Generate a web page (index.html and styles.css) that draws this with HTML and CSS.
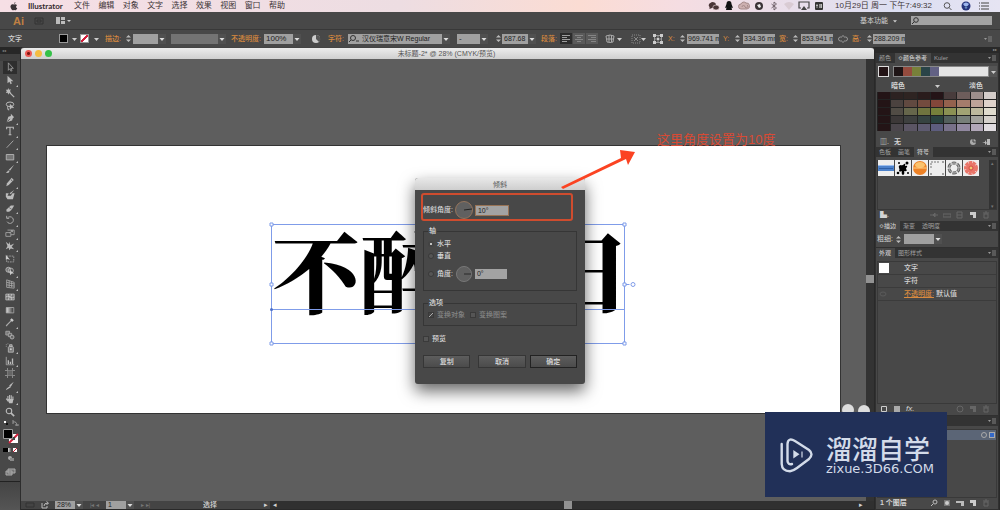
FILE: index.html
```
<!DOCTYPE html>
<html lang="zh-CN">
<head>
<meta charset="utf-8">
<title>Illustrator</title>
<link rel="stylesheet" href="styles.css">
</head>
<body>
<svg class="defs" aria-hidden="true">
  <symbol id="select" viewBox="0 0 12 12"><path d="M4 1v9l2-2 1 3 1.500-.6L7.300 7.600H10z" fill="#333" stroke="#aaa" stroke-width=".9"/></symbol>
  <symbol id="direct" viewBox="0 0 12 12"><path d="M3 1v9l2.300-2 1.400 3 1.500-.7L7 7.400h3z" fill="#bbb"/></symbol>
  <symbol id="wand" viewBox="0 0 12 12"><path d="M5 5l6 6" stroke="#bbb" stroke-width="1.500"/><path d="M4 0l.8 2.200L7 1.500 6 4l1.500 1.500-2.400.3L4 8l-.8-2.300L1 6l1.200-2L1 2l2.200.2z" fill="#bbb"/></symbol>
  <symbol id="lasso" viewBox="0 0 12 12"><ellipse cx="6" cy="4" rx="4.500" ry="2.800" fill="none" stroke="#bbb" stroke-width="1.200"/><path d="M3 6v3q0 2 2 2M6 4v6l2-2h2.500z" fill="#bbb" stroke="#bbb" stroke-width=".6"/></symbol>
  <symbol id="pen" viewBox="0 0 12 12"><path d="M7 1l4 4-1.500 1-1 3L2 11l2-6.500 3-1z" fill="#bbb"/><path d="M2.500 10.500L6 7" stroke="#444"/></symbol>
  <symbol id="type" viewBox="0 0 12 12"><path d="M2 4V1.500h8V4M6 1.500v9M4.300 10.500h3.400" fill="none" stroke="#bbb" stroke-width="1.300"/></symbol>
  <symbol id="line" viewBox="0 0 12 12"><path d="M2 10.500L10 2" stroke="#aaa" stroke-width="1.100"/></symbol>
  <symbol id="rect" viewBox="0 0 12 12"><path d="M1.500 3h9v6.500h-9z" fill="#777" stroke="#bbb"/></symbol>
  <symbol id="brush" viewBox="0 0 12 12"><path d="M11 1L6 8 4.500 6.800zM1 10q2 0 2.800-2.500L5.500 9q-2 3-4.500 1" fill="#bbb"/></symbol>
  <symbol id="pencil" viewBox="0 0 12 12"><path d="M8 1l2.500 2.500-6 6L1.500 11l1-3.500z" fill="#bbb"/><path d="M7 3l2 2" stroke="#444"/></symbol>
  <symbol id="blob" viewBox="0 0 12 12"><path d="M11 0L7 5 5.500 4zM1 4h3.500L3 7h4l2-3h2.500L9.500 11H3L1 8z" fill="#bbb"/></symbol>
  <symbol id="eraser" viewBox="0 0 12 12"><path d="M1.500 8L7 3h4L8 8l-3 2.500H2z" fill="#bbb"/><path d="M5 5.500l3 2" stroke="#666"/></symbol>
  <symbol id="rotate" viewBox="0 0 12 12"><path d="M3 3.500A4 4 0 1 1 2.500 8M2 1v3h3" fill="none" stroke="#aaa" stroke-width="1.200"/></symbol>
  <symbol id="scale" viewBox="0 0 12 12"><path d="M1 5.500h6V10H1zM3 2.500h8V8H7M5 6l4-2.500M7 3h2v2" fill="none" stroke="#aaa"/></symbol>
  <symbol id="warp" viewBox="0 0 12 12"><path d="M1 1l3.500 3L5 1l1.500 4L11 3 8 7l3 3-4-1-2 2-.5-3L1 10l2-4z" fill="#bbb"/></symbol>
  <symbol id="free" viewBox="0 0 12 12"><path d="M2 2.500h8.500v7H2z" fill="none" stroke="#aaa" stroke-dasharray="2 1"/><path d="M1 1v6l2-1 3 1z" fill="#ccc"/></symbol>
  <symbol id="builder" viewBox="0 0 12 12"><circle cx="4" cy="4.500" r="3" fill="#777" stroke="#bbb"/><circle cx="7" cy="5.500" r="3" fill="none" stroke="#bbb"/><path d="M6 5v6l2-2h3z" fill="#ccc"/></symbol>
  <symbol id="persp" viewBox="0 0 12 12"><path d="M2 1v9l9 1V4zM5 2v8M8 3v7M2 4l9 2M2 7l9 1.500" fill="none" stroke="#aaa"/></symbol>
  <symbol id="mesh" viewBox="0 0 12 12"><path d="M1 2.500h10v7H1z" fill="#777" stroke="#bbb"/><path d="M1 6q2-2 5 0t5 0M4 2.500q2 3 0 7M8 2.500q-2 3 0 7" fill="none" stroke="#ccc"/></symbol>
  <symbol id="grad" viewBox="0 0 12 12"><path d="M1.500 3h9v6.500h-9z" fill="url(#gray)" stroke="#aaa"/></symbol>
  <symbol id="dropper" viewBox="0 0 12 12"><path d="M8 1.500L10.500 4 8.500 6 6 3.500z" fill="#ccc"/><path d="M7 5l-4.500 4.500L1.500 11" fill="none" stroke="#aaa" stroke-width="1.500"/></symbol>
  <symbol id="blend" viewBox="0 0 12 12"><path d="M1 1.500h4.500V6H1z" fill="#777" stroke="#aaa"/><path d="M4 4h4v4H4z" fill="#666" stroke="#aaa"/><circle cx="8.500" cy="8.500" r="2.300" fill="#666" stroke="#bbb"/></symbol>
  <symbol id="spray" viewBox="0 0 12 12"><path d="M4 5l1-1h4l1 1v6H4zM5.500 2h3v2h-3z" fill="#777" stroke="#bbb"/><circle cx="7" cy="7.500" r="1.200" fill="#ccc"/><path d="M1 2h1M3 1h1M1 4h1" stroke="#aaa"/></symbol>
  <symbol id="graph" viewBox="0 0 12 12"><path d="M1.500 1v9.500H11" fill="none" stroke="#aaa"/><path d="M4 9.500V5M6.500 9.500V7M9 9.500V3" stroke="#bbb" stroke-width="1.600"/></symbol>
  <symbol id="board" viewBox="0 0 12 12"><path d="M3 0v12M9 0v12M0 3h12M0 9h12" stroke="#999"/><path d="M3 3h6v6H3z" fill="#666"/></symbol>
  <symbol id="slice" viewBox="0 0 12 12"><path d="M10.500 1L7 7 5 5.500zM6 6l1 1.500L1 11l1-2z" fill="#bbb"/></symbol>
  <symbol id="hand" viewBox="0 0 12 12"><path d="M3.500 7V2.500M5.500 6V1.200M7.500 6V1.500M9.500 7V3M1.500 5.500L4 9" stroke="#bbb" stroke-width="1.300"/><path d="M3 6h7.200L9 11H5z" fill="#bbb"/></symbol>
  <symbol id="glass" viewBox="0 0 12 12"><circle cx="4.800" cy="4.800" r="3.300" fill="none" stroke="#bbb" stroke-width="1.300"/><path d="M7.300 7.300L11 11" stroke="#bbb" stroke-width="2"/></symbol>
  <symbol id="menu" viewBox="0 0 8 6"><path d="M0 2h3L1.500 4z" fill="#999"/><path d="M4 1h4M4 3h4M4 5h4" stroke="#888" stroke-width=".9"/></symbol>
  <symbol id="step" viewBox="0 0 5 9"><path d="M0 3.500L2.500 1 5 3.500zM0 5.500h5L2.500 8z" fill="#bbb"/></symbol>
  <symbol id="caret" viewBox="0 0 5 4"><path d="M0 1h5L2.500 4z" fill="#ccc"/></symbol>
  <symbol id="new" viewBox="0 0 8 8"><path d="M1 1h6v6H4V4H1z" fill="#ccc"/></symbol>
  <symbol id="trash" viewBox="0 0 8 8"><path d="M1 2h6M3 1h2M2 3v4h4V3z" fill="none" stroke="#666"/></symbol>
  <symbol id="left" viewBox="0 0 8 8"><path d="M0 .5h8M0 2.500h5M0 4.500h8M0 6.500h5" stroke="#aaa" stroke-width=".9"/></symbol>
  <symbol id="center" viewBox="0 0 8 8"><path d="M0 .5h8M2 2.500h4M0 4.500h8M2 6.500h4" stroke="#8a8a8a" stroke-width=".9"/></symbol>
  <symbol id="right" viewBox="0 0 8 8"><path d="M0 .5h8M3 2.500h5M0 4.500h8M3 6.500h5" stroke="#8a8a8a" stroke-width=".9"/></symbol>
  <linearGradient id="gray"><stop stop-color="#ddd"/><stop offset="1" stop-color="#333"/></linearGradient>
</svg>

<header class="menubar">
  <svg class="apple" viewBox="0 0 10 12"><path d="M7 0Q5 .5 5 2.500 7 2.300 7 0M8.500 9.800Q7.500 11.500 6.500 11T3.800 11Q2.800 11.500 1.600 9.800-.5 6.500.7 4.500T3.500 3L5 3.400 6.500 3Q8.200 3 9 4.200 7.200 5.500 8 7.200q.5.800 1.300 1-.3 1-.8 1.600" fill="#3a3336"/></svg>
  <strong>Illustrator</strong>
  <nav class="menus"><span>文件</span><span>编辑</span><span>对象</span><span>文字</span><span>选择</span><span>效果</span><span>视图</span><span>窗口</span><span>帮助</span></nav>
  <div class="tray">
    <svg viewBox="0 0 12 10"><path d="M4 1q4 0 4 3T4 7L1.500 8V6Q-1 3 4 1" fill="#4a3536"/><ellipse cx="8" cy="6.500" rx="3.200" ry="2.500" fill="#4a3536" stroke="#f1dbe0" stroke-width=".6"/></svg>
    <svg viewBox="0 0 12 10"><path d="M6 0q2.500 0 2.500 3L10 7 8.500 6.500 9 9H3l.5-2.500L2 7l1.500-4Q3.500 0 6 0" fill="#111"/></svg>
    <svg viewBox="0 0 12 10"><path d="M3 8a2 2 0 0 1 0-5 3 3 0 0 1 5-1 3 3 0 0 1 1 6z" fill="#cdb0b0" stroke="#a58a8a"/><path d="M4 6a1.500 1.500 0 1 1 3 0 1.500 1.500 0 1 0 2-2" fill="none" stroke="#a58a8a"/></svg>
    <svg viewBox="0 0 12 10"><circle cx="6" cy="5" r="4" fill="#3a3336"/><path d="M4 4l3-1 1 3-2 1z" fill="#eee"/></svg>
    <svg viewBox="0 0 12 10"><path d="M3.500 3l5 4L6 9V1l2.500 2-5 4" fill="none" stroke="#6a5c64" stroke-width=".9"/></svg>
    <svg viewBox="0 0 12 10"><path d="M1 3q5-4 10 0L6 9z" fill="#d9cbd3"/></svg>
    <svg viewBox="0 0 12 10"><path d="M3 7H1V1h10v6H9" fill="none" stroke="#444" stroke-width="1.200"/><path d="M6 5l3 4H3z" fill="#444"/></svg>
    <svg viewBox="0 0 12 10"><rect x="2" y="1" width="8" height="8" rx="1" fill="#333"/><path d="M4 3v4M3 4.500h2M6 4h3M6 6h3M7 3v4M8.500 3v4" stroke="#eee" stroke-width=".6"/></svg>
  </div>
  <time>10月29日 周一 下午7:49:32</time>
  <div class="tray end">
    <svg viewBox="0 0 12 10"><circle cx="5" cy="4.500" r="2.800" fill="none" stroke="#555"/><path d="M7 6.500L9.500 9" stroke="#555"/></svg>
    <svg viewBox="0 0 12 10"><circle cx="6" cy="5" r="4.500" fill="#26347c"/><path d="M3 3q3-3 6 0L7.500 5h-3z" fill="#9db6ee"/><circle cx="6" cy="6.500" r="1.200" fill="#68b"/></svg>
    <svg viewBox="0 0 12 10"><path d="M1 2h1M3 2h8M1 5h1M3 5h8M1 8h1M3 8h8" stroke="#444" stroke-width="1.200"/></svg>
  </div>
</header>

<div class="appbar">
  <b class="ai">Ai</b>
  <svg class="bridge" viewBox="0 0 10 8"><path d="M1 1h8v6H1zM3 3h4v2H3z" fill="none" stroke="#333"/></svg>
  <svg class="arrange" viewBox="0 0 16 8"><path d="M0 0h4v7H0zM5 0h4v3H5zM5 4h4v3H5z" fill="#bbb"/><path d="M11 3h4l-2 2z" fill="#ccc"/></svg>
  <span class="work">基本功能</span>
  <svg class="tick" aria-hidden="true"><use href="#caret"/></svg>
  <label class="search"><svg viewBox="0 0 8 8"><circle cx="5" cy="3" r="2.300" fill="none" stroke="#333"/><path d="M3.300 4.700L1 7" stroke="#333"/></svg><input type="search" aria-label="搜索"></label>
</div>

<div class="control">
  <b>文字</b>
  <i class="chip black"></i><svg class="tick"><use href="#caret"/></svg>
  <i class="chip none"></i><svg class="tick"><use href="#caret"/></svg>
  <label class="hot" for="sw">描边:</label><svg class="step"><use href="#step"/></svg>
  <select id="sw" class="w33"><option></option></select>
  <select class="w55 dim" aria-label="画笔"><option></option></select>
  <label class="hot" for="op">不透明度:</label>
  <select id="op" class="w37"><option>100%</option></select>
  <svg class="ico" viewBox="0 0 10 10"><circle cx="5" cy="5" r="4" fill="#ccc"/><path d="M5 1v4l3 3A4 4 0 0 0 5 1" fill="#555"/></svg>
  <label class="hot" for="font">字符:</label>
  <select id="font" class="w102 lens"><option>汉仪瑞意宋W Regular</option></select>
  <select class="w31" aria-label="样式"><option>-</option></select>
  <svg class="step"><use href="#step"/></svg>
  <select class="w34" aria-label="字号"><option>687.68</option></select>
  <span class="hot">段落:</span>
  <span class="aligns"><button class="on" aria-label="左对齐"><svg><use href="#left"/></svg></button><button aria-label="居中"><svg><use href="#center"/></svg></button><button aria-label="右对齐"><svg><use href="#right"/></svg></button></span>
  <svg class="ico" viewBox="0 0 10 10"><path d="M1 2q4-2 8 0L8 8q-3 1-6 0zM1.500 5h7M4 1v7M6.500 1v7" fill="none" stroke="#aaa"/></svg><svg class="tick"><use href="#caret"/></svg>
  <svg class="ico" viewBox="0 0 10 10"><path d="M1 1h8v8H1z" fill="none" stroke="#888" stroke-dasharray="1 1"/><path d="M3 3l4 4M7 3L3 7" stroke="#888"/></svg><svg class="tick"><use href="#caret"/></svg>
  <svg class="ico" viewBox="0 0 10 10"><path d="M1.500 1.500h7v7h-7zM5 1v8M1 5h8" fill="none" stroke="#999"/><path d="M0 0h3v3H0zM7 0h3v3H7zM0 7h3v3H0zM7 7h3v3H7zM4 4h2v2H4z" fill="#ccc"/></svg>
  <label class="hot" for="x">X:</label><svg class="step"><use href="#step"/></svg><input id="x" value="969.741 mm">
  <label class="hot" for="y">Y:</label><svg class="step"><use href="#step"/></svg><input id="y" value="334.36 mm">
  <label class="hot" for="w">宽:</label><svg class="step"><use href="#step"/></svg><input id="w" value="853.941 mm">
  <svg class="ico" viewBox="0 0 10 10"><path d="M4 3H2.500a2 2 0 0 0 0 4H4M6 3h1.500a2 2 0 0 1 0 4H6M5 1v2M5 7v2" fill="none" stroke="#999"/></svg>
  <label class="hot" for="h">高:</label><svg class="step"><use href="#step"/></svg><input id="h" value="288.209 mm">
  <svg class="more"><use href="#menu"/></svg>
</div>

<main class="work-area">
  <aside class="toolbar">
    <div class="grip">◂◂</div>
    <div class="tools">
      <button class="on" aria-label="选择"><svg><use href="#select"/></svg></button>
      <button class="sub" aria-label="直接选择"><svg><use href="#direct"/></svg></button>
      <button aria-label="魔棒"><svg><use href="#wand"/></svg></button>
      <button aria-label="套索"><svg><use href="#lasso"/></svg></button>
      <button class="sub" aria-label="钢笔"><svg><use href="#pen"/></svg></button>
      <button class="sub" aria-label="文字"><svg><use href="#type"/></svg></button>
      <button class="sub" aria-label="直线"><svg><use href="#line"/></svg></button>
      <button class="sub" aria-label="矩形"><svg><use href="#rect"/></svg></button>
      <button aria-label="画笔"><svg><use href="#brush"/></svg></button>
      <button class="sub" aria-label="铅笔"><svg><use href="#pencil"/></svg></button>
      <button aria-label="斑点画笔"><svg><use href="#blob"/></svg></button>
      <button class="sub" aria-label="橡皮擦"><svg><use href="#eraser"/></svg></button>
      <button class="sub" aria-label="旋转"><svg><use href="#rotate"/></svg></button>
      <button class="sub" aria-label="比例缩放"><svg><use href="#scale"/></svg></button>
      <button class="sub" aria-label="变形"><svg><use href="#warp"/></svg></button>
      <button aria-label="自由变换"><svg><use href="#free"/></svg></button>
      <button class="sub" aria-label="形状生成器"><svg><use href="#builder"/></svg></button>
      <button class="sub" aria-label="透视网格"><svg><use href="#persp"/></svg></button>
      <button aria-label="网格"><svg><use href="#mesh"/></svg></button>
      <button aria-label="渐变"><svg><use href="#grad"/></svg></button>
      <button class="sub" aria-label="吸管"><svg><use href="#dropper"/></svg></button>
      <button aria-label="混合"><svg><use href="#blend"/></svg></button>
      <button class="sub" aria-label="符号喷枪"><svg><use href="#spray"/></svg></button>
      <button class="sub" aria-label="柱形图"><svg><use href="#graph"/></svg></button>
      <button aria-label="画板"><svg><use href="#board"/></svg></button>
      <button class="sub" aria-label="切片"><svg><use href="#slice"/></svg></button>
      <button class="sub" aria-label="抓手"><svg><use href="#hand"/></svg></button>
      <button aria-label="缩放"><svg><use href="#glass"/></svg></button>
    </div>
    <svg class="paint" viewBox="0 0 20 63">
      <path d="M4 3h2v2H4z" fill="#fff"/><path d="M6 5h2v2H6z" fill="#111"/><path d="M13 4q4-1 4 4M13 2v4M15 7h4" fill="none" stroke="#999"/>
      <path d="M9 16h9v9H9z" fill="#fff"/><path d="M9 25l9-9" stroke="#d2203c" stroke-width="2"/><path d="M12 19h3v3h-3z" fill="#444"/>
      <path d="M3.500 11.500h9v9h-9z" fill="#000" stroke="#999"/>
      <path d="M3 30h5v4H3z"/><path d="M8 30h4v4H8z" fill="url(#gray)"/><path d="M13 30h4v4h-4z" fill="#fff"/><path d="M13 34l4-4" stroke="#d2203c"/>
      <circle cx="10" cy="40" r="2" fill="#aaa"/><path d="M10 40h4v3h-4z" fill="#888"/>
      <path d="M8 51h7v4H8zM6 53h6v4H6z" fill="#777" stroke="#aaa"/>
    </svg>
  </aside>

  <section class="document">
    <div class="titlebar"><i class="light red"></i><i class="light yellow"></i><i class="light green"></i><span>未标题-2* @ 28% (CMYK/预览)</span></div>
    <div class="view">
      <div class="canvas">
        <div class="artboard"></div>
        <div class="lettering">不醉不归</div>
        <svg class="selection" viewBox="0 0 368 124">
          <g fill="none" stroke="#7f9ce9"><path d="M2.500 2.500h353v119H2.500zM2.500 87.500h353M355.500 62.500h5"/><g fill="#fff"><path d="M1 1h3v3H1zM354 1h3v3h-3zM1 120h3v3H1zM354 120h3v3h-3zM1 61h3v3H1zM354 61h3v3h-3z"/><circle cx="364" cy="62.500" r="2"/></g></g><circle cx="2.500" cy="87.500" r="1.500" fill="#4d70c9"/>
        </svg>
      </div>
      <div class="vscroll"><i></i></div>
    </div>
    <div class="status">
      <svg class="ico" viewBox="0 0 10 8"><path d="M1 2h8v4H1z" fill="none" stroke="#333"/></svg>
      <svg class="ico" viewBox="0 0 10 8"><path d="M2 2v5h5V5M4 5q0-3 4-3M6.500.5L8.500 2l-2 2" fill="none" stroke="#bbb"/></svg>
      <select aria-label="缩放比例"><option>28%</option></select>
      <span class="faint">|◂ ◂</span>
      <select aria-label="画板编号"><option>1</option></select>
      <span class="faint">▸ ▸|</span>
      <span class="state">选择</span>
      <span class="go">▸</span>
      <div class="hscroll"><span>◂</span><i></i><span>▸</span></div>
    </div>
  </section>

  <aside class="panels">
    <div class="dockhead">▸▸</div>
    <section class="guide">
      <div class="tabs"><span>颜色</span><span class="on">≎颜色参考</span><span>Kuler</span><svg><use href="#menu"/></svg></div>
      <div class="body">
        <div class="harmony"><i class="base"></i><div class="strip"><i></i><i></i><i></i><i></i><i></i></div><button class="drop" aria-label="协调规则"><svg class="tick"><use href="#caret"/></svg></button></div>
        <div class="shades"><b>暗色</b><svg class="tick"><use href="#caret"/></svg><b>淡色</b></div>
        <div class="swatches">
          <i style="background:#231416"></i><i style="background:#2c2221"></i><i style="background:#2e2422"></i><i style="background:#2a1c1c"></i><i style="background:#241417"></i><i style="background:#483c3c"></i><i style="background:#6d5d5b"></i><i style="background:#9d8f8c"></i><i style="background:#d4cdca"></i>
          <i style="background:#231416"></i><i style="background:#4b423f"></i><i style="background:#614940"></i><i style="background:#734b3e"></i><i style="background:#83463a"></i><i style="background:#94614d"></i><i style="background:#a57c6c"></i><i style="background:#bda399"></i><i style="background:#ded2cb"></i>
          <i style="background:#231416"></i><i style="background:#514c45"></i><i style="background:#66664b"></i><i style="background:#70743f"></i><i style="background:#75803b"></i><i style="background:#8b9153"></i><i style="background:#a1a374"></i><i style="background:#bdb99e"></i><i style="background:#dfdbce"></i>
          <i style="background:#231416"></i><i style="background:#3c3838"></i><i style="background:#3e403f"></i><i style="background:#364341"></i><i style="background:#29423f"></i><i style="background:#535f5b"></i><i style="background:#777f79"></i><i style="background:#a3a39e"></i><i style="background:#d4d0cb"></i>
          <i style="background:#231416"></i><i style="background:#4b464c"></i><i style="background:#5b5564"></i><i style="background:#5d5a70"></i><i style="background:#5d5d7e"></i><i style="background:#787189"></i><i style="background:#9188a0"></i><i style="background:#b1a7b8"></i><i style="background:#e0dce0"></i>
        </div>
        <div class="foot"><span>▥.</span><b>无</b><em></em><svg viewBox="0 0 8 8"><circle cx="4" cy="4" r="3" fill="#aaa"/><path d="M4 1v3h3" stroke="#444" fill="none"/></svg><svg viewBox="0 0 8 8"><path d="M0 4h3V2l2 3-2 2V5zM5 1h3v6H5z" fill="#bbb"/></svg></div>
      </div>
    </section>
    <section class="symbols">
      <div class="tabs"><span>色板</span><span>画笔</span><span class="on">符号</span><svg><use href="#menu"/></svg></div>
      <div class="body">
        <div class="shelf">
          <div class="thumbs">
            <svg viewBox="0 0 16 16"><path d="M0 5h16v6H0z" fill="#4d82cb"/><path d="M1 8h14v1H1z" fill="#2f5fa6"/><path d="M0 5h16v1H0z" fill="#9bbdee"/></svg>
            <svg viewBox="0 0 16 16"><path d="M5 5q3 1 4-1 2-1 1 2 3-1 2 1-2 2 0 3-1 2-3 1 1 3-1 4-2-1-1-4-2 1-3 0 1-2 0-3-1-2 1-3"/><circle cx="4" cy="3" r="1"/><circle cx="12" cy="3" r="1.500"/><circle cx="3" cy="13" r="1.300"/><circle cx="13" cy="13" r="1"/></svg>
            <svg viewBox="0 0 16 16"><circle cx="8" cy="8" r="7" fill="#ee8226"/><ellipse cx="8" cy="5" rx="5" ry="3" fill="#fbc36d"/><path d="M1 8h14" stroke="#ffd187"/></svg>
            <svg viewBox="0 0 16 16"><path d="M2 8V2h9" fill="none" stroke="#777" stroke-dasharray="2 1"/><path d="M1 14h2M13 14h2M14 1v2" stroke="#555"/></svg>
            <svg viewBox="0 0 16 16"><circle cx="8" cy="8" r="5" fill="none" stroke="#666" stroke-width="3" stroke-dasharray="4 1.240"/><circle cx="8" cy="8" r="5" fill="none" stroke="#bbb"/></svg>
            <svg viewBox="0 0 16 16"><circle cx="8" cy="8" r="5" fill="#e97569" stroke="#e97569" stroke-width="4" stroke-dasharray="3 .490"/><circle cx="8" cy="8" r="2" fill="#f2c873" stroke="#cf4b46"/></svg>
          </div>
          <div class="bar"><span>▴</span><span>▾</span></div>
        </div>
        <div class="foot"><span>▙.</span><em></em><svg viewBox="0 0 8 8"><path d="M0 4h3l2-2v4L3 4h5" stroke="#666" fill="#666"/></svg><svg viewBox="0 0 8 8"><path d="M0 3h8v3H0z" fill="none" stroke="#666"/></svg><svg viewBox="0 0 8 8"><path d="M1 1h5v6H1zM1 4h5" fill="none" stroke="#666"/></svg><svg><use href="#new"/></svg><svg><use href="#trash"/></svg></div>
      </div>
    </section>
    <section class="stroke">
      <div class="tabs"><span class="on">≎描边</span><span>渐变</span><span>透明度</span><svg><use href="#menu"/></svg></div>
      <div class="body"><label for="wt">粗细:</label><svg class="step"><use href="#step"/></svg><select id="wt"><option></option></select></div>
    </section>
    <section class="look">
      <div class="tabs"><span class="on">外观</span><span>图形样式</span><svg><use href="#menu"/></svg></div>
      <div class="body">
        <div class="list">
          <div class="entry"><i></i><b>文字</b></div>
          <div class="entry"><b>字符</b></div>
          <div class="entry"><svg viewBox="0 0 8 8"><ellipse cx="4" cy="4" rx="3" ry="2" fill="none" stroke="#5b5b5b"/></svg><b><a href="#opacity">不透明度:</a> 默认值</b></div>
        </div>
        <div class="foot"><svg viewBox="0 0 8 8"><path d="M1.500 1.500h5v5h-5z" fill="none" stroke="#ccc"/></svg><svg viewBox="0 0 8 8"><path d="M1 1h6v6H1z" fill="#aaa"/></svg><span class="fx">fx.</span><em></em><svg viewBox="0 0 8 8"><circle cx="4" cy="4" r="3" fill="none" stroke="#666"/></svg><svg viewBox="0 0 8 8"><path d="M1 1h6v6H4V4H1z" fill="#666"/></svg><svg><use href="#trash"/></svg></div>
      </div>
    </section>
    <section class="layers">
      <div class="tabs"><svg><use href="#menu"/></svg></div>
      <div class="body">
        <div class="list"><div class="layer"><i></i><i class="sel"></i></div></div>
        <div class="foot"><b>1 个图层</b><em></em><svg viewBox="0 0 8 8"><circle cx="5" cy="3" r="2" fill="none" stroke="#bbb"/><path d="M3 5L1 7" stroke="#bbb"/></svg><svg viewBox="0 0 8 8"><path d="M1 1h6v6H1z" fill="#777"/><circle cx="4" cy="4" r="2" fill="#ccc"/></svg><svg viewBox="0 0 8 8"><path d="M0 2h8v5H5V4H0z" fill="#bbb"/></svg><svg><use href="#new"/></svg><svg><use href="#trash"/></svg></div>
      </div>
    </section>
  </aside>
</main>

<form class="dialog" role="dialog" aria-label="倾斜">
  <h1>倾斜</h1>
  <div class="content">
    <div class="row shear"><label for="shear">倾斜角度:</label><svg class="dial warm" viewBox="0 0 18 18"><circle cx="9" cy="9" r="8.500"/><path d="M9 9l8-1"/></svg><input id="shear" class="focus" value="10°"></div>
    <fieldset class="axis">
      <legend>轴</legend>
      <div class="row"><input type="radio" name="axis" id="hz" checked><label for="hz">水平</label></div>
      <div class="row"><input type="radio" name="axis" id="vt"><label for="vt">垂直</label></div>
      <div class="row angle"><input type="radio" name="axis" id="an"><label for="an">角度:</label><svg class="dial" viewBox="0 0 18 18"><circle cx="9" cy="9" r="8.500"/><path d="M9 9h8"/></svg><input aria-label="角度" value="0°"></div>
    </fieldset>
    <fieldset class="options">
      <legend>选项</legend>
      <div class="row"><input type="checkbox" id="obj" checked disabled><label for="obj">变换对象</label><input type="checkbox" id="pat" disabled><label for="pat">变换图案</label></div>
    </fieldset>
    <div class="row preview"><input type="checkbox" id="pre"><label for="pre">预览</label></div>
    <div class="buttons"><button type="button">复制</button><button type="button" class="cancel">取消</button><button type="button" class="ok">确定</button></div>
  </div>
</form>

<div class="highlight"></div>
<svg class="arrow" viewBox="0 0 76 40"><path d="M1 38L61 9l-1-8 15 2-7 13-2-6L3 40z" fill="#fb4322"/></svg>
<p class="note">这里角度设置为10度</p>
<svg class="bubbles" viewBox="0 0 30 12"><circle cx="7" cy="7" r="6"/><circle cx="23" cy="8" r="6"/></svg>

<div class="brand">
  <svg viewBox="0 0 36 38"><path d="M1.700 8v20q.3 7 8.300 7.300 3-.3 7-3.300l12-9q5-5 0-9L15 5Q8 1 7.500 8v17q.5 4 4.500 3" fill="none" stroke="#d3dbe9" stroke-width="2.400" stroke-linecap="round"/><path d="M13.300 14l6.200 4.300-6.200 4.300z" fill="#d3dbe9"/><path d="M22 15.500v6" stroke="#d3dbe9" stroke-width="1.200"/></svg>
  <div><strong>溜溜自学</strong><span>zixue.3D66.COM</span></div>
</div>
</body>
</html>
```
FILE: styles.css
```
* { box-sizing: border-box; }
html { height: 100%; }
body {
  margin: 0; min-height: 100%; position: relative; overflow: hidden;
  display: flex; flex-direction: column;
  background: #262626; color: #d4d4d4;
  font: 7px/10px "Liberation Sans", "Noto Sans CJK SC", sans-serif;
}
button, input, select { font: inherit; color: #222; margin: 0; padding: 0; border: 0; min-width: 0; border-radius: 0; }
svg { display: block; flex: none; }
i, em { font-style: normal; }
.defs { position: absolute; width: 0; height: 0; }
.tick { width: 5px; height: 4px; }
.step { width: 5px; height: 9px; }
.ico { width: 10px; height: 10px; }

.menubar {
  display: flex; align-items: center; height: 12px; padding: 0 10px;
  background: linear-gradient(90deg, #f6dfe5, #eddde2 40%, #fbdcd3 58%, #f5dde2 68%, #dcdff2 90%, #e6e4f3);
  color: #3d3437; font-size: 8px; line-height: 12px;
}
.apple { width: 8px; height: 9px; margin-right: 10px; }
.menubar strong { width: 46px; font-size: 8px; color: #332b2e; font-family: Lato, sans-serif; }
.menus { display: flex; justify-content: space-between; width: 211px; }
.tray { display: flex; gap: 3px; margin-left: auto; }
.tray svg { width: 12px; height: 10px; }
.menubar time { margin-left: 10px; white-space: nowrap; }
.end { gap: 6px; margin-left: 10px; }

.appbar { display: flex; align-items: center; height: 18px; padding: 0 8px 0 13px; background: #484848; border-bottom: 1px solid #383838; }
.ai { width: 21px; color: #c08043; font-size: 11px; }
.bridge { width: 10px; height: 8px; }
.arrange { width: 16px; height: 8px; margin-left: 12px; }
.work { margin-left: auto; }
.appbar .tick { width: 4px; margin: 0 12px 0 5px; }
.search { display: flex; align-items: center; width: 81px; height: 9px; margin-left: 2px; background: #a3a3a3; }
.search svg { width: 8px; height: 8px; }
.search input { flex: 1; background: none; height: 9px; outline: 0; appearance: none; }

.control {
  display: grid; align-items: center; height: 17px; padding: 0 8px; background: #484848; white-space: nowrap;
  grid-template-columns: 51px 13px 8px 14px 11px 21px 7px 38px 60px 33px 47px 17px 20px 109px 39px 6px 39px 19px 45px 12px 14px 10px 12px 15px 12px 7px 36px 12px 8px 36px 14px 8px 37px 14px 15px 6px 32px 1fr;
}
.control b { font-weight: 500; }
.chip { width: 9px; height: 9px; border: 1px solid #999; }
.chip.black { background: #000; }
.chip.none { background: linear-gradient(135deg, #fff 42%, #d2203c 42% 58%, #fff 58%); }
.hot { color: #d88a3f; font-weight: 500; }
select {
  appearance: none; height: 10px; padding: 0 8px 0 2px; font-size: 8px; line-height: 10px;
  background: url("data:image/svg+xml,%3Csvg xmlns='http://www.w3.org/2000/svg' viewBox='0 0 8 10'%3E%3Cpath d='M0 0h8v10H0z' fill='%23505050'/%3E%3Cpath d='M1.500 4h5L4 7z' fill='%23ddd'/%3E%3C/svg%3E") right / 8px 10px no-repeat #a0a0a0;
}
.w31 { width: 31px; } .w33 { width: 33px; } .w34 { width: 34px; font-size: 7px; } .w37 { width: 37px; } .w55 { width: 55px; } .w102 { width: 102px; }
.dim { background-color: #737373; }
.lens { padding-left: 14px; font-size: 7px; background-image: url("data:image/svg+xml,%3Csvg xmlns='http://www.w3.org/2000/svg' viewBox='0 0 8 10'%3E%3Cpath d='M0 0h8v10H0z' fill='%23505050'/%3E%3Cpath d='M1.500 4h5L4 7z' fill='%23ddd'/%3E%3C/svg%3E"), url("data:image/svg+xml,%3Csvg xmlns='http://www.w3.org/2000/svg' viewBox='0 0 12 10'%3E%3Ccircle cx='5' cy='4' r='2.500' fill='none' stroke='%23333'/%3E%3Cpath d='M3 6L1 8M8 7h3' stroke='%23333'/%3E%3C/svg%3E"); background-position: right, left; background-size: 8px 10px, 12px 10px; }
.control input { width: 32px; height: 10px; padding-left: 1px; background: #a0a0a0; font-size: 7px; }
.aligns { display: flex; gap: 1px; }
.aligns button { display: grid; place-items: center; width: 12px; height: 11px; background: #5a5a5a; }
.aligns .on { background: #2c2c2c; }
.aligns svg { width: 8px; height: 8px; }
.more { width: 8px; height: 6px; justify-self: end; }

.work-area { display: flex; flex: 1; }
.toolbar { display: flex; flex-direction: column; width: 21px; background: linear-gradient(#484848 434px, #222 434px 435px, #444 435px, #555); border-right: 1px solid #2d2d2d; }
.grip { height: 14px; padding-left: 2px; background: linear-gradient(#272727 7px, #404040 7px); color: #888; font-size: 4px; line-height: 7px; }
.tools { display: flex; flex-direction: column; height: 357px; }
.tools button { position: relative; flex: 1; display: grid; place-items: center; background: none; margin: 0 3px; }
.tools svg { width: 10px; height: 10px; }
.tools .on { background: #2e2e2e; }
.tools .sub::after { content: ""; position: absolute; right: -1px; bottom: 0; border: 1px solid #bbb; border-top-color: transparent; border-left-color: transparent; }
.paint { width: 20px; height: 63px; }

.document { flex: 1; min-width: 0; display: flex; flex-direction: column; }
.titlebar { display: flex; align-items: center; gap: 3px; height: 12px; padding: 0 4px; background: linear-gradient(#ececec, #cfcfcf); border-radius: 3px 3px 0 0; color: #555; border-top: 1px solid #444; }
.titlebar span { flex: 1; padding-right: 32px; text-align: center; }
.light { width: 7px; height: 7px; border-radius: 50%; }
.red { background: radial-gradient(#7c1613 25%, #ee5a54 35%); } .yellow { background: #f5bd42; } .green { background: #35c148; }
.view { display: flex; flex: 1; }
.canvas { position: relative; flex: 1; display: flex; padding: 87px 26px 88px; background: #5e5e5e; }
.artboard { flex: 1; background: #fff; outline: 1px solid #333; }
.lettering { position: absolute; left: 251px; top: 162px; color: #000; font: 900 88px/94px "Noto Serif CJK SC", "Noto Sans CJK SC", serif; white-space: nowrap; }
.selection { position: absolute; left: 248px; top: 163px; width: 368px; height: 124px; }
.vscroll { width: 8px; padding-top: 216px; background: #333; }
.vscroll i { display: block; height: 8px; background: #929292; }
.status { display: flex; align-items: center; height: 9px; padding-left: 4px; background: #444; border-bottom: 1px solid #292929; line-height: 8px; }
.status .ico { height: 8px; margin-right: 5px; }
.status select { width: 28px; height: 8px; line-height: 8px; font-size: 7px; }
.faint { width: 23px; text-align: center; color: #777; font-size: 6px; }
.state { margin-left: 46px; font-weight: 500; }
.go { margin-left: auto; font-size: 7px; width: 5px; }
.hscroll { display: flex; justify-content: space-between; align-items: center; width: 604px; height: 8px; padding: 0 11px 0 3px; background: #303030; }
.hscroll i { width: 8px; height: 8px; background: #929292; }
.state + .go { margin-right: 1px; }

.panels { display: flex; flex-direction: column; width: 126px; padding: 0 1px; background: #292929; }
.dockhead { height: 6px; padding-right: 2px; text-align: right; font-size: 4px; line-height: 6px; color: #999; }
.panels section { display: flex; flex-direction: column; border: 1px solid #303030; border-width: 0 1px 1px; }
.tabs { display: flex; height: 10px; background: #333; color: #a0a0a0; font-size: 6px; }
.tabs span { padding: 0 4px 0 3px; }
.tabs .on { background: #484848; color: #ccc; font-weight: 500; }
.tabs svg { width: 8px; height: 6px; margin: 2px 2px 0 auto; }
.body { flex: 1; padding: 3px 1px 1px; background: #484848; }
.foot { display: flex; align-items: center; gap: 5px; height: 10px; padding: 0 7px 0 3px; }
.foot em { flex: 1; }
.foot svg { width: 8px; height: 8px; }
.harmony { display: flex; height: 11px; padding-left: 1px; }
.base { width: 11px; margin-right: 4px; background: #231416; border: 1px solid #ddd; }
.strip { display: flex; flex: 1; background: #e4e4e4; border: 1px solid #888; }
.strip i { width: 9px; background: #1f1516; }
.strip i:nth-child(2) { background: #944b3e; } .strip i:nth-child(3) { background: #78803a; } .strip i:nth-child(4) { background: #2a4448; } .strip i:nth-child(5) { background: #626184; }
.drop { display: grid; place-items: center; width: 8px; background: #555; }
.shades { display: flex; justify-content: space-between; align-items: center; height: 15px; padding: 2px 14px 0; }
.swatches { display: grid; grid-template: repeat(5, 7px) / repeat(9, 1fr); gap: 1px; padding: 0 1px; background: #222; }
.guide { height: 94px; }
.guide .foot { height: 13px; margin-top: 4px; }
.symbols { height: 74px; }
.shelf { display: flex; justify-content: space-between; height: 50px; border: 1px solid #383838; border-top: 0; }
.thumbs { display: flex; gap: 1px; }
.thumbs svg { width: 16px; height: 16px; background: #eee; }
.bar { display: flex; flex-direction: column; justify-content: space-between; width: 7px; background: #333; color: #777; font-size: 5px; line-height: 6px; text-align: center; }
.stroke { height: 27px; }
.stroke .body { display: flex; align-items: center; gap: 3px; padding: 0 1px; }
.stroke select { width: 38px; }
.look { height: 168px; }
.look .body, .layers .body { display: flex; flex-direction: column; }
.list { flex: 1; border: 1px solid #393939; }
.entry { display: flex; align-items: center; height: 13px; padding-left: 1px; border-bottom: 1px solid #3b3b3b; }
.entry b { margin-left: auto; width: 92px; font-weight: 500; font-size: 7px; }
.entry i { width: 10px; height: 10px; background: #fff; }
.entry svg { width: 8px; height: 8px; }
.entry a { color: #d88a3f; }
.fx { font: italic 8px/8px "Liberation Sans", sans-serif; }
.layers { flex: 1; }
.layer { display: flex; justify-content: flex-end; align-items: center; gap: 2px; height: 10px; background: #5b6576; padding-right: 1px; }
.layer i { width: 6px; height: 6px; border: 1px solid #aaa; border-radius: 50%; }
.layer .sel { background: #3469c9; border-radius: 0; }

.dialog { position: absolute; left: 415px; top: 178px; width: 170px; background: #484848; border-radius: 3px; overflow: hidden; box-shadow: 0 7px 16px rgba(0,0,0,.6); color: #d8d8d8; font-weight: 500; }
.dialog h1 { margin: 0; height: 12px; font: 7px/12px "Noto Sans CJK SC", sans-serif; text-align: center; color: #555; background: linear-gradient(#e8e8e8, #cecece); }
.content { padding: 10px 8px 16px; }
.row { display: flex; align-items: center; gap: 3px; height: 12px; white-space: nowrap; }
.shear { height: 20px; gap: 2px; }
.dial { width: 18px; height: 18px; fill: #606060; stroke: #7b7b7b; }
.dial path { stroke: #222; }
.warm circle { stroke: #94745c; }
.dialog input:not([type]) { width: 32px; height: 10px; padding-left: 2px; background: #a3a3a3; font-size: 7px; }
.dialog .focus:not([type]) { height: 11px; width: 34px; border: 1px solid #987355; }
fieldset { min-width: 0; margin: 0; border: 1px solid #363636; }
legend { padding: 0 1px; line-height: 8px; height: 8px; }
.axis { margin-top: 7px; padding: 3px 5px 7px 4px; }
.axis .angle { height: 18px; margin-top: 3px; gap: 3px; }
.angle .dial { width: 16px; height: 16px; }
.options { margin-top: 8px; padding: 2px 5px 4px 4px; color: #858585; }
.options legend { color: #d8d8d8; }
.options label + input { margin-left: 2px; }
.dialog input[type=radio], .dialog input[type=checkbox] { appearance: none; width: 6px; height: 6px; border: 1px solid #3a3a3a; background: #555; }
.dialog input[type=radio] { border-radius: 50%; }
.dialog input[type=radio]:checked { background: #eee; border: 2px solid #444; }
.dialog input[type=checkbox]:checked { background: linear-gradient(135deg, #444 45%, #aaa 45% 60%, #444 60%); }
.preview { margin-top: 7px; }
.buttons { display: flex; gap: 4px; margin-top: 10px; }
.buttons button { flex: 1; height: 13px; color: #ddd; font-weight: 500; background: linear-gradient(#5d5d5d, #4b4b4b); border: 1px solid #363636; }
.buttons .cancel { margin-left: 4px; }
.buttons .ok { border-color: #222; }

.highlight { position: absolute; left: 421px; top: 193px; width: 152px; height: 28px; border: 2px solid #cf4c2e; border-radius: 3px; }
.arrow { position: absolute; left: 560px; top: 149px; width: 76px; height: 40px; }
.note { position: absolute; left: 657px; top: 132px; margin: 0; color: #d84a34; font-size: 13px; line-height: 16px; white-space: nowrap; }
.bubbles { position: absolute; left: 841px; top: 403px; width: 30px; height: 12px; fill: #ddd; }
.brand { position: absolute; left: 765px; top: 412px; display: flex; align-items: center; gap: 10px; padding: 21px 13px 21px 15px; background: #213058; color: #d3dbe9; }
.brand svg { width: 36px; height: 38px; }
.brand strong { display: block; font: 500 26px/29px "Noto Sans CJK SC", sans-serif; }
.brand span { display: block; font: 13px/14px "DejaVu Sans", sans-serif; }
```
